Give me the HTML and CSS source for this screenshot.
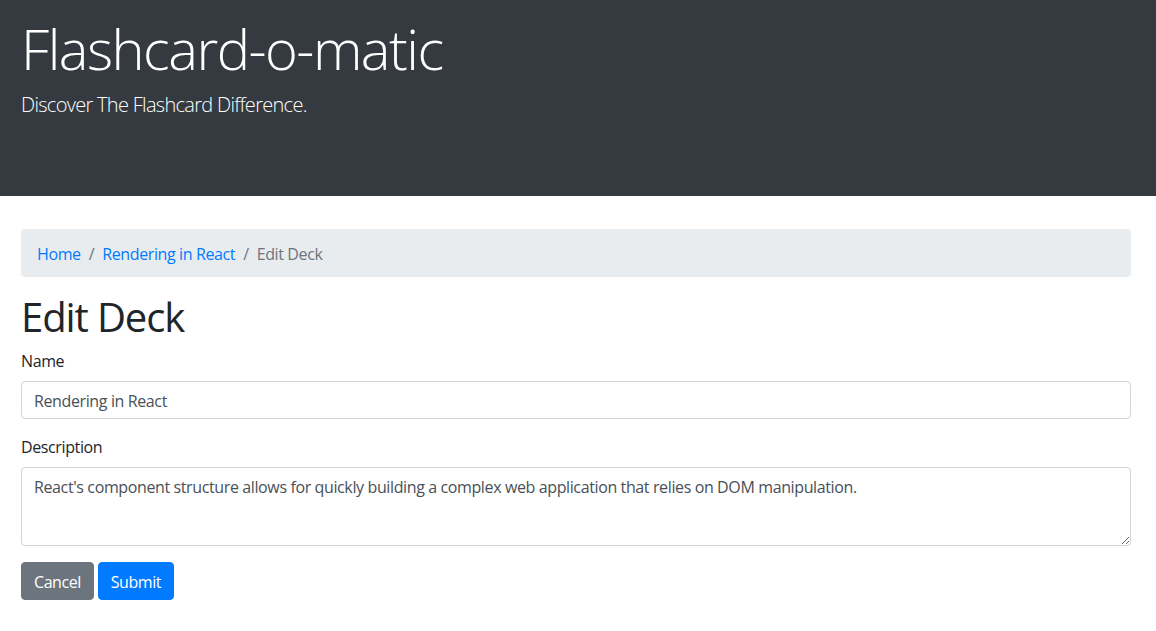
FILE: index.html
```html
<!DOCTYPE html>
<html lang="en">
<head>
<meta charset="utf-8">
<title>Flashcard-o-matic</title>
<link rel="stylesheet" href="styles.css">
</head>
<body>
<header class="jumbotron">
  <div class="container">
    <h1 class="display">Flashcard-o-matic</h1>
    <p class="lead">Discover The Flashcard Difference.</p>
  </div>
</header>
<main class="container">
  <nav class="breadcrumb">
    <a href="#" class="crumb-link">Home</a>
    <span class="sep">/</span>
    <a href="#" class="crumb-link">Rendering in React</a>
    <span class="sep">/</span>
    <span class="crumb-active">Edit Deck</span>
  </nav>
  <h1 class="page-title">Edit Deck</h1>
  <form class="deck-form">
    <div class="form-group">
      <label class="form-label" for="name">Name</label>
      <input class="form-control" id="name" type="text" value="Rendering in React">
    </div>
    <div class="form-group">
      <label class="form-label" for="description">Description</label>
      <textarea class="form-control textarea" id="description">React's component structure allows for quickly building a complex web application that relies on DOM manipulation.</textarea>
    </div>
    <div class="actions">
      <button type="button" class="btn btn-secondary">Cancel</button>
      <button type="submit" class="btn btn-primary">Submit</button>
    </div>
  </form>
</main>
</body>
</html>
```
FILE: styles.css
```css
* { box-sizing: border-box; }
html, body {
  margin: 0;
  padding: 0;
  background: #fff;
}
body {
  font-family: "Open Sans", "Noto Sans", sans-serif;
  font-size: 16px;
  line-height: 1.5;
  color: #212529;
  letter-spacing: -0.38px;
}
.container {
  width: 1131px;
  padding-left: 21px;
}
.jumbotron {
  background: #343a40;
  color: #fff;
  height: 196px;
  padding-top: 15px;
  margin-bottom: 33px;
}
.display {
  margin: 0 0 8px 0;
  font-size: 56px;
  font-weight: 300;
  line-height: 67px;
  letter-spacing: -1.5px;
}
.lead {
  margin: 0;
  font-size: 20px;
  font-weight: 300;
  line-height: 30px;
  letter-spacing: -0.7px;
}
.breadcrumb {
  display: flex;
  align-items: center;
  height: 48px;
  padding: 1px 16px 0;
  background: #e9ecef;
  border-radius: 4px;
  margin-bottom: 16px;
}
.crumb-link {
  color: #007bff;
  text-decoration: none;
}
.sep {
  color: #6c757d;
  padding: 0 8px;
}
.crumb-active { color: #6c757d; }
.page-title {
  margin: 0 0 8px 0;
  font-size: 40px;
  font-weight: 400;
  line-height: 48px;
  letter-spacing: -1.1px;
}
.form-group { margin-bottom: 16px; }
.form-label {
  display: block;
  margin-bottom: 8px;
  line-height: 24px;
}
.form-control {
  display: block;
  width: 100%;
  height: 38px;
  padding: 7px 12px 5px;
  font-family: inherit;
  font-size: 16px;
  line-height: 24px;
  letter-spacing: -0.38px;
  color: #495057;
  background: #fff;
  border: 1px solid #ced4da;
  border-radius: 4px;
  outline: none;
}
.textarea {
  height: 79px;
  resize: vertical;
  margin: 0;
}
.actions {
  display: flex;
  gap: 4px;
}
.btn {
  height: 38px;
  padding: 7px 12px 5px;
  font-family: inherit;
  font-size: 16px;
  line-height: 24px;
  letter-spacing: -0.45px;
  color: #fff;
  border: 1px solid transparent;
  border-radius: 4px;
}
.btn-secondary { background: #6c757d; border-color: #6c757d; }
.btn-primary { background: #007bff; border-color: #007bff; }
```
